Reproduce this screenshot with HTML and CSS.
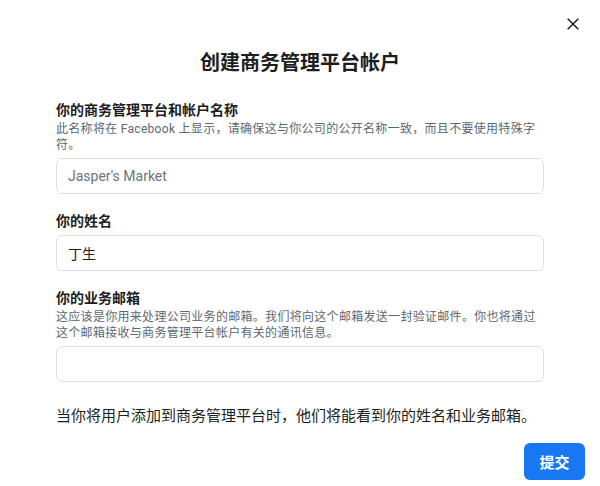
FILE: index.html
```html
<!DOCTYPE html>
<html lang="zh-CN">
<head>
<meta charset="utf-8">
<title>创建商务管理平台帐户</title>
<link rel="stylesheet" href="styles.css">
</head>
<body>
<div class="dialog">
  <button class="close" aria-label="关闭">
    <svg viewBox="0 0 12 12" width="12" height="12"><path d="M0.7 0.7 L11.3 11.3 M11.3 0.7 L0.7 11.3" stroke="#1c1e21" stroke-width="1.5" fill="none"/></svg>
  </button>
  <h1 class="title">创建商务管理平台帐户</h1>
  <div class="form">
    <div class="field">
      <div class="label">你的商务管理平台和帐户名称</div>
      <div class="desc">此名称将在 Facebook 上显示，请确保这与你公司的公开名称一致，而且不要使用特殊字符。</div>
      <input class="input" type="text" placeholder="Jasper's Market">
    </div>
    <div class="field">
      <div class="label">你的姓名</div>
      <input class="input" type="text" value="丁生">
    </div>
    <div class="field">
      <div class="label">你的业务邮箱</div>
      <div class="desc">这应该是你用来处理公司业务的邮箱。我们将向这个邮箱发送一封验证邮件。你也将通过这个邮箱接收与商务管理平台帐户有关的通讯信息。</div>
      <input class="input" type="text">
    </div>
    <p class="note">当你将用户添加到商务管理平台时，他们将能看到你的姓名和业务邮箱。</p>
  </div>
  <div class="actions">
    <button class="submit">提交</button>
  </div>
</div>
</body>
</html>
```

FILE: styles.css
```css
html, body {
  margin: 0;
  padding: 0;
  background: #ffffff;
}
body {
  font-family: Roboto, "Noto Sans CJK SC", sans-serif;
  color: #1c1e21;
}
.dialog {
  position: relative;
  width: 600px;
  height: 486px;
  padding-top: 51px;
  box-sizing: border-box;
}
.close {
  position: absolute;
  top: 18px;
  left: 567px;
  width: 12px;
  height: 12px;
  padding: 0;
  border: 0;
  background: none;
  display: block;
}
.close svg {
  display: block;
}
.title {
  margin: 0;
  text-align: center;
  font-size: 20px;
  line-height: 24px;
  font-weight: 700;
}
.form {
  padding: 0 56px;
  margin-top: 26.5px;
}
.field {
  display: flex;
  flex-direction: column;
  margin-bottom: 19px;
}
.label {
  font-size: 14px;
  line-height: 17px;
  font-weight: 700;
}
.desc {
  font-size: 12px;
  letter-spacing: 0.3px;
  line-height: 16.5px;
  margin-top: 2px;
  color: #606770;
}
.input {
  margin-top: 4.5px;
  height: 36px;
  box-sizing: border-box;
  border: 1px solid #dddfe2;
  border-radius: 6px;
  padding: 0 11px;
  font-family: Roboto, "Noto Sans CJK SC", sans-serif;
  font-size: 14px;
  color: #1c1e21;
  background: #ffffff;
  outline: none;
}
.input::placeholder {
  color: #6f7378;
}
.note {
  margin: 24px 0 0;
  font-size: 15px;
  line-height: 20px;
}
.actions {
  display: flex;
  justify-content: flex-end;
  padding-right: 15px;
  margin-top: 17px;
}
.submit {
  width: 61px;
  height: 37px;
  border: 0;
  border-radius: 6px;
  background: #1877f2;
  color: #ffffff;
  font-family: Roboto, "Noto Sans CJK SC", sans-serif;
  font-size: 15px;
  font-weight: 700;
  padding: 0;
}
```
